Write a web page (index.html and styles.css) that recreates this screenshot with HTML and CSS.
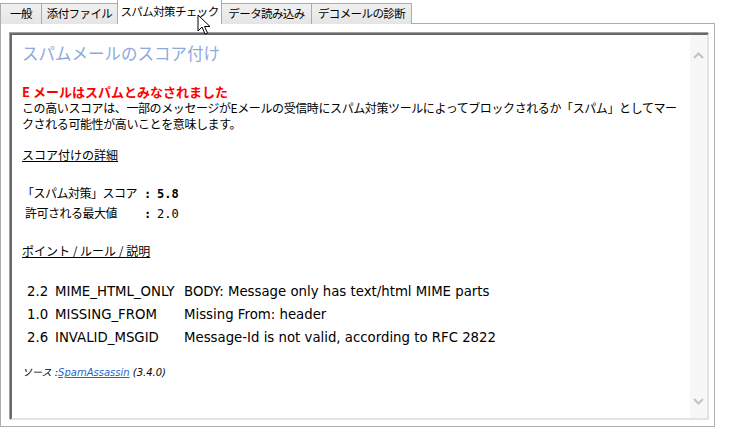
FILE: index.html
```html
<!DOCTYPE html>
<html lang="ja">
<head>
<meta charset="utf-8">
<title>スパム対策チェック</title>
<link rel="stylesheet" href="styles.css">
</head>
<body>
<div class="window">
  <div class="tabs">
    <div class="tab t1">一般</div>
    <div class="tab t2">添付ファイル</div>
    <div class="tab t3 active">スパム対策チェック</div>
    <div class="tab t4">データ読み込み</div>
    <div class="tab t5">デコメールの診断</div>
  </div>
  <div class="panel">
    <div class="box">
      <div class="content">
        <h1 class="title">スパムメールのスコア付け</h1>
        <p class="alert">E メールはスパムとみなされました</p>
        <p class="desc">この高いスコアは、一部のメッセージがEメールの受信時にスパム対策ツールによってブロックされるか「スパム」としてマークされる可能性が高いことを意味します。</p>
        <p class="heading">スコア付けの詳細</p>
        <div class="scores">
          <div class="srow"><span class="slabel">「スパム対策」スコア</span><span class="colon">:</span><span class="num bold">5.8</span></div>
          <div class="srow"><span class="slabel indent">許可される最大値</span><span class="colon">:</span><span class="num">2.0</span></div>
        </div>
        <p class="heading">ポイント / ルール / 説明</p>
        <div class="rules">
          <span>2.2</span><span>MIME_HTML_ONLY</span><span>BODY: Message only has text/html MIME parts</span>
          <span>1.0</span><span>MISSING_FROM</span><span>Missing From: header</span>
          <span>2.6</span><span>INVALID_MSGID</span><span>Message-Id is not valid, according to RFC 2822</span>
        </div>
        <p class="source">ソース :<a href="#">SpamAssassin</a> (3.4.0)</p>
      </div>
      <div class="scrollbar">
        <svg class="arrow" width="11" height="7" viewBox="0 0 11 7"><path d="M1 6 L5.5 1.5 L10 6" fill="none" stroke="#c2c2c2" stroke-width="2"/></svg>
        <svg class="arrow" width="11" height="7" viewBox="0 0 11 7"><path d="M1 1 L5.5 5.5 L10 1" fill="none" stroke="#c2c2c2" stroke-width="2"/></svg>
      </div>
    </div>
  </div>
  <svg class="cursor" width="14" height="22" viewBox="0 0 14 22"><path d="M1 1 L1 17 L5 13 L8 20 L10.5 19 L7.5 12.5 L13 12.5 Z" fill="#fff" stroke="#000" stroke-width="1"/></svg>
</div>
</body>
</html>
```
FILE: styles.css
```css
html, body {
  margin: 0;
  padding: 0;
  background: #ffffff;
}
body {
  font-family: "Noto Sans CJK JP", "Liberation Sans", sans-serif;
  font-size: 12px;
  color: #000;
}
.window {
  position: relative;
  width: 715px;
}
.tabs {
  display: flex;
  align-items: flex-end;
  height: 24px;
  margin-bottom: -1px;
  position: relative;
  z-index: 1;
}
.tab {
  height: 21px;
  box-sizing: border-box;
  border: 1px solid #acacac;
  border-bottom: none;
  margin-right: -1px;
  background: linear-gradient(#f0f0f0, #e5e5e5);
  font-size: 11.5px;
  letter-spacing: -0.6px;
  line-height: 19px;
  text-align: center;
  white-space: nowrap;
}
.t1 { width: 42px; }
.t2 { width: 77px; }
.t3 { width: 105px; }
.t4 { width: 91px; }
.t5 { width: 101px; }
.tab.active {
  height: 25px;
  background: #ffffff;
  line-height: 22px;
  position: relative;
  z-index: 2;
  padding-bottom: 1px;
}
.panel {
  border: 1px solid #acacac;
  background: #ffffff;
  height: 404px;
  box-sizing: border-box;
  padding: 9px 5px 6px 9px;
  display: flex;
}
.box {
  flex: 1;
  display: flex;
  border-style: solid;
  border-width: 2px;
  border-color: #696969 #e3e3e3 #e3e3e3 #696969;
  box-shadow: -1px -1px 0 #a0a0a0, 1px 1px 0 #ffffff;
}
.content {
  flex: 1;
  padding: 9px 6px 0 10px;
}
.scrollbar {
  width: 17px;
  background: #f7f7f7;
  display: flex;
  flex-direction: column;
  justify-content: space-between;
  align-items: center;
  padding: 17px 0 13px;
}
.arrow { display: block; }
.title {
  margin: 0;
  font-size: 16.5px;
  font-weight: normal;
  color: #8eaadc;
  line-height: 18px;
  height: 18px;
}
.alert {
  margin: 22px 0 0;
  color: #ff0000;
  font-weight: bold;
  font-size: 13px;
  line-height: 16px;
}
.desc {
  margin: 0;
  line-height: 16px;
  letter-spacing: -0.4px;
}
.heading {
  margin: 15px 0 0;
  text-decoration: underline;
  line-height: 16px;
}
.scores {
  margin-top: 22px;
  display: flex;
  flex-direction: column;
  gap: 4px;
}
.srow {
  display: flex;
  align-items: baseline;
  height: 16px;
  line-height: 16px;
}
.slabel { width: 122px; letter-spacing: -0.5px; }
.slabel.indent { padding-left: 3px; width: 119px; }
.colon {
  font-family: "DejaVu Sans Mono", monospace;
  font-weight: bold;
  width: 13px;
  font-size: 12px;
}
.num {
  font-family: "DejaVu Sans Mono", monospace;
  font-size: 12px;
  color: #000;
}
.num.bold { font-weight: bold; }
.scores + .heading { margin-top: 22px; }
.rules {
  margin-top: 25px;
  display: grid;
  grid-template-columns: 28px 129px auto;
  justify-content: start;
  row-gap: 7px;
  font-family: "DejaVu Sans", sans-serif;
  font-size: 13.3px;
  line-height: 16px;
  padding-left: 5px;
}
.source {
  margin: 20px 0 0;
  font-size: 10px;
  font-style: italic;
  font-family: "DejaVu Sans", "Noto Sans CJK JP", sans-serif;
  line-height: 14px;
}
.source a {
  color: #1a66cc;
  text-decoration: underline;
}
.cursor {
  position: absolute;
  left: 197px;
  top: 14px;
  z-index: 5;
}
```
